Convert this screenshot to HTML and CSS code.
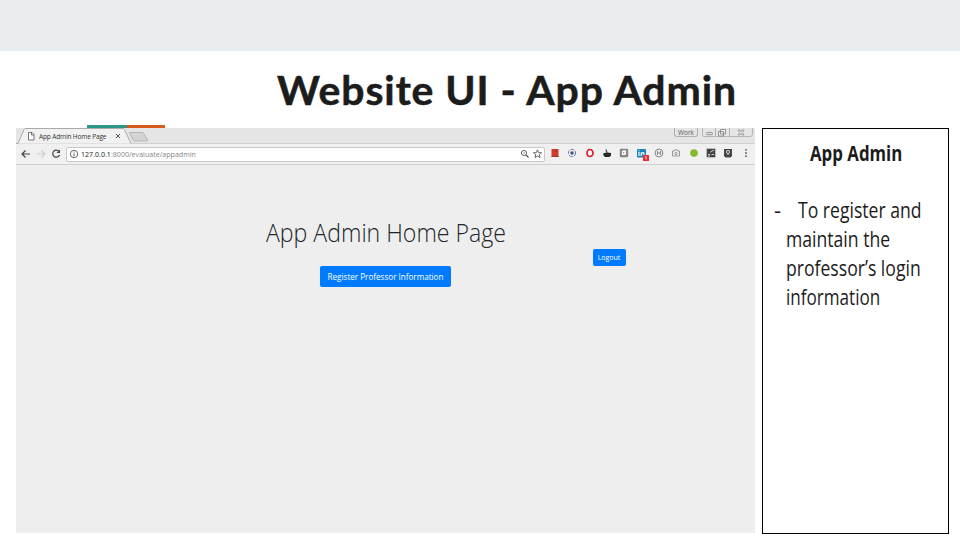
FILE: index.html
```html
<!DOCTYPE html>
<html lang="en">
<head>
<meta charset="utf-8">
<title>Website UI - App Admin</title>
<link rel="stylesheet" href="styles.css">
</head>
<body>
<div class="band"></div>
<header class="head">
  <h1 class="title">Website UI - App Admin</h1>
  <div class="accent"></div>
</header>
<main class="content">
  <section class="browser">
    <div class="tabstrip">
      <svg class="tabs" width="150" height="16" viewBox="0 0 150 16">
        <path d="M0 15.5H2L8 1.5Q8.5.5 10 .5H107Q108 .5 108.500 1.500L115 15.500Z" fill="#f1f1f1"/>
        <path d="M0 15.500H2L8 1.500Q8.500.5 10 .5H107Q108 .5 108.500 1.500L115 15.500" fill="none" stroke="#aaa"/>
        <path d="M113.500 4.500H127L131.500 12Q132 13 130.500 13H119Q117.500 13 117 12Z" fill="#d4d4d4" stroke="#b5b5b5"/>
        <path d="M12.500 4.500H16L18 6.500V12H12.500ZM15.500 4.500V7H18" fill="#fff" stroke="#555" stroke-width=".8"/>
        <path d="M100 6L104 10M104 6L100 10" stroke="#555" stroke-width="1"/>
      </svg>
      <span class="tabname">App Admin Home Page</span>
      <div class="window">
        <span class="work">Work</span>
        <svg width="51" height="10" viewBox="0 0 51 10" fill="none" stroke="#888" stroke-width=".9">
          <path d="M.5 0V7Q.5 8.500 2 8.500H48Q50.500 8.500 50.500 6V0M13.500 0V8M27.500 0V8" stroke="#b0b0b0"/>
          <rect x="4.500" y="4.500" width="6" height="2.200" rx="1"/>
          <path d="M18.500 1.500H23.500V6H18.500ZM16.500 3.500H21.500V8H16.500Z" fill="#eee"/>
          <path d="M36 2H38L39 3.500L40 2H42L40.500 4.500L42 7H40L39 5.500L38 7H36L37.500 4.500Z" stroke-width=".7"/>
        </svg>
      </div>
    </div>
    <div class="toolbar">
      <svg class="nav" width="50" height="20" viewBox="0 0 50 20" fill="none" stroke-width="1.200">
        <path d="M14 10H6.500M9.500 6.500L6 10L9.500 13.500" stroke="#444"/>
        <path d="M21 10H28.500M25.500 6.500L29 10L25.500 13.500" stroke="#ccc"/>
        <path d="M43 7.500A3.500 3.500 0 1 0 43.500 11" stroke="#444"/><path d="M44 5.500V9H40.500Z" fill="#444"/>
      </svg>
      <div class="address">
        <svg width="10" height="10" viewBox="0 0 10 10" fill="none" stroke="#555"><circle cx="5" cy="5" r="3.700" stroke-width=".9"/><path d="M5 4.500V7.300M5 2.600V3.600"/></svg>
        <span class="url"><b>127.0.0.1</b>:8000/evaluate/appadmin</span>
        <svg class="marks" width="24" height="12" viewBox="0 0 24 12" fill="none" stroke="#555">
          <circle cx="5" cy="5" r="2.600" stroke-width=".9"/><path d="M7 7L9.500 9.500" stroke-width="1.200"/><path d="M4 5H6" stroke-width=".6"/>
          <path d="M18.500 1.800L19.600 4.600L22.500 4.800L20.300 6.700L21 9.600L18.500 8L16 9.600L16.700 6.700L14.500 4.800L17.400 4.600Z" stroke-width=".9"/>
        </svg>
      </div>
      <div class="extensions">
        <svg viewBox="0 0 12 12"><path d="M2.500 2H9.500V10H2.500Z" fill="#cf3b2f"/><path d="M2.500 9.500H9.500M7 2V5" stroke="#a5392f"/></svg>
        <svg viewBox="0 0 12 12" fill="none"><circle cx="6" cy="6" r="3.600" stroke="#71809a" stroke-dasharray="4 1"/><circle cx="6" cy="6" r="1.700" fill="#3d5377"/></svg>
        <svg viewBox="0 0 12 12"><ellipse cx="6" cy="6" rx="3" ry="3.500" fill="#fff" stroke="#df1e2c" stroke-width="1.700"/></svg>
        <svg viewBox="0 0 12 12"><path d="M2 6.500Q6 5 10 6V8.500Q9 10 7.500 10H4Q2.500 9 2 6.500Z" fill="#292929"/><path d="M5 2.500L6 6" stroke="#555" stroke-width="1.300"/></svg>
        <svg viewBox="0 0 12 12"><rect x="1.800" y="1.800" width="8.400" height="8.400" rx="1" fill="#888"/><path d="M4.500 3.500H8V7L7 8H4V4Z" fill="#fff"/><path d="M5 5H7L5 7Z" fill="#999"/></svg>
        <svg class="linked" viewBox="0 0 14 14"><rect x="1" y="2" width="9" height="8.500" rx="1" fill="#1683bb"/><path d="M3 5V9M5.200 9V5.500M5.200 6.500Q7.800 4.500 8 7V9" fill="none" stroke="#fff" stroke-width="1.200"/><path d="M2.500 3.700H3.600" stroke="#fff"/><rect x="7" y="8" width="6" height="6" rx=".5" fill="#ee2635"/><path d="M9.300 9.800L10 9.300V12.500" fill="none" stroke="#fff" stroke-width=".8"/></svg>
        <svg viewBox="0 0 12 12" fill="none" stroke="#888"><circle cx="6" cy="6" r="3.900"/><path d="M4.500 4V8M7.500 4V8M4.500 6H7.500"/></svg>
        <svg viewBox="0 0 12 12" fill="none" stroke="#999"><path d="M2.500 4H4.500L5 2.700H7L7.500 4H9.500V9H2.500Z"/><circle cx="6" cy="6.500" r="1.200"/></svg>
        <svg viewBox="0 0 12 12"><circle cx="6" cy="6" r="3.800" fill="#84b82c"/></svg>
        <svg viewBox="0 0 12 12"><rect x="1.700" y="1.700" width="8.600" height="8.600" fill="#444"/><path d="M5.500 5L9 3M3 7.500H5M3 9H5M6.500 7.500H9" stroke="#ddd" stroke-width=".9"/></svg>
        <svg viewBox="0 0 12 12"><path d="M2 2H10V9L8.500 10.500H3.500L2 9Z" fill="#444"/><circle cx="6" cy="5" r="1.600" fill="none" stroke="#ddd"/><path d="M6 6.500V8" stroke="#ddd"/></svg>
        <svg viewBox="0 0 12 12" fill="#555"><circle cx="6" cy="2.800" r=".9"/><circle cx="6" cy="6" r=".9"/><circle cx="6" cy="9.200" r=".9"/></svg>
      </div>
    </div>
    <div class="page">
      <h2 class="pagetitle">App Admin Home Page</h2>
      <button class="btn logout">Logout</button>
      <button class="btn register">Register Professor Information</button>
    </div>
  </section>
  <aside class="notes">
    <h3 class="notetitle"><span>App Admin</span></h3>
    <div class="note">
      <span class="line first"><span class="dash">-</span><span class="l1">To register and</span></span>
      <span class="line l2">maintain the</span>
      <span class="line l3">professor’s login</span>
      <span class="line l4">information</span>
    </div>
  </aside>
</main>
</body>
</html>
```
FILE: styles.css
```css
* { box-sizing: border-box; }
body { margin: 0; width: 960px; height: 540px; overflow: hidden; background: #fff; color: #1c1c1c; font-family: "Open Sans", sans-serif; }
.band { height: 51px; background: #e8ecee; }
.head { height: 77px; display: flex; flex-direction: column; }
.title { margin: 14px 0 0 277px; height: 60px; font: 700 39.5px/50px Lato, sans-serif; letter-spacing: .9px; white-space: nowrap; transform: scaleX(1.036); transform-origin: 0 50%; -webkit-text-stroke: .5px #1c1c1c; }
.accent { margin-left: 87px; width: 78px; height: 3px; background: linear-gradient(90deg, #2c9688 40px, #d75b1c 40px); }
.content { display: flex; gap: 7px; padding-left: 16px; }
.browser { width: 739px; height: 405px; background: #eee; display: flex; flex-direction: column; }
.tabstrip { height: 16px; background: #e5e5e5; border-bottom: 1px solid #d0d0d0; display: flex; position: relative; }
.tabs { flex: none; }
.tabname { position: absolute; left: 22.5px; top: 3px; font-size: 7px; line-height: 11px; color: #333; white-space: nowrap; transform: scaleX(.93); transform-origin: 0 50%; letter-spacing: -.15px; }
.window { margin-left: auto; padding-right: 2px; display: flex; gap: 4px; align-items: flex-start; }
.work { width: 24px; height: 9px; border: 1px solid #b0b0b0; border-top: 0; border-radius: 0 0 3px 3px; text-align: center; font: 6.5px/9px "Open Sans", sans-serif; color: #555; }
.toolbar { height: 21px; background: #f0f0f0; border-bottom: 1px solid #cfcfcf; display: flex; align-items: center; }
.nav { flex: none; }
.address { width: 479px; height: 15px; padding: 0 1px 0 2px; display: flex; align-items: center; gap: 2px; background: #fff; border: 1px solid #c8c8c8; border-radius: 2px; }
.url { font-size: 7.2px; line-height: 12px; color: #888; white-space: nowrap; transform: scaleX(.987); transform-origin: 0 50%; }
.url b { font-weight: 400; color: #222; }
.marks { margin-left: auto; }
.extensions { display: flex; gap: 5.35px; margin-left: 4px; }
.extensions svg { flex: none; width: 12px; height: 12px; }
.extensions .linked { width: 14px; height: 14px; margin-right: -2px; }
.page { display: grid; grid-template-columns: 304px 131px 141.500px 33px; grid-template-rows: 84px 17px 21px; }
.pagetitle { grid-column: 1 / 4; grid-row: 1; margin: 48px 0 0 249.500px; font-size: 25px; line-height: 38px; font-weight: 300; color: #212529; white-space: nowrap; transform: scaleX(.924); transform-origin: 0 50%; }
.btn { padding: 0; border: 0; border-radius: 2px; background: #007bff; color: #fff; font-family: "Open Sans", sans-serif; white-space: nowrap; }
.logout { grid-column: 4; grid-row: 2; font-size: 7px; }
.register { grid-column: 2; grid-row: 3; font-size: 8.1px; }
.notes { width: 187px; height: 406px; border: 1px solid #000; background: #fff; font-size: 22px; line-height: 29px; }
.notetitle { margin: 9px 0 28px 47px; font-size: 22px; line-height: 29px; font-weight: 700; white-space: nowrap; }
.notetitle span, .line, .l1 { display: inline-block; transform-origin: 0 50%; transform: scaleX(.8); }
.notetitle span { transform: scaleX(.765); }
.note { display: flex; flex-direction: column; margin-left: 23px; }
.line { height: 29px; white-space: nowrap; }
.first { display: flex; transform: none; margin-left: -12px; }
.l4 { transform: scaleX(.776); }
.dash { width: 24px; flex: none; }
```
